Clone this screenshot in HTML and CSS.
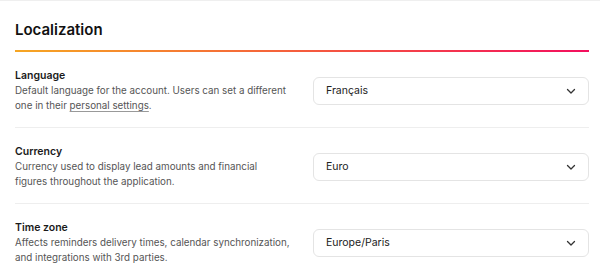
FILE: index.html
```html
<!DOCTYPE html>
<html lang="en">
<head>
  <meta charset="UTF-8">
  <meta name="viewport" content="width=device-width, initial-scale=1.0">
  <title>Localization</title>
  <link rel="stylesheet" href="styles.css">
</head>
<body>
  <div class="panel">
    <div class="panel-header">
      <h2>Localization</h2>
    </div>

    <div class="row">
      <div class="info">
        <div class="label">Language</div>
        <p class="desc">Default language for the account. Users can set a different one in their <a href="#">personal settings</a>.</p>
      </div>
      <div class="select">
        <span>Français</span>
        <svg width="12" height="12" viewBox="0 0 12 12"><path d="M2.5 4.5 6 8l3.5-3.5" fill="none" stroke="#333" stroke-width="1.3" stroke-linecap="round" stroke-linejoin="round"/></svg>
      </div>
    </div>

    <div class="row">
      <div class="info">
        <div class="label">Currency</div>
        <p class="desc">Currency used to display lead amounts and financial figures throughout the application.</p>
      </div>
      <div class="select">
        <span>Euro</span>
        <svg width="12" height="12" viewBox="0 0 12 12"><path d="M2.5 4.5 6 8l3.5-3.5" fill="none" stroke="#333" stroke-width="1.3" stroke-linecap="round" stroke-linejoin="round"/></svg>
      </div>
    </div>

    <div class="row">
      <div class="info">
        <div class="label">Time zone</div>
        <p class="desc">Affects reminders delivery times, calendar synchronization, and integrations with 3rd parties.</p>
      </div>
      <div class="select">
        <span>Europe/Paris</span>
        <svg width="12" height="12" viewBox="0 0 12 12"><path d="M2.5 4.5 6 8l3.5-3.5" fill="none" stroke="#333" stroke-width="1.3" stroke-linecap="round" stroke-linejoin="round"/></svg>
      </div>
    </div>
  </div>
</body>
</html>
```

FILE: styles.css
```css
body {
  font-family: Inter, "Noto Sans", sans-serif;
  margin: 0;
  padding: 0;
  background-color: #fff;
  color: #1a1a1a;
}

.panel {
  border-top: 1px solid #efefef;
  padding: 0 11px 0 15px;
}

.panel-header {
  padding-top: 19px;
  padding-bottom: 12px;
  position: relative;
}

.panel-header::after {
  content: "";
  position: absolute;
  left: 0;
  right: 0;
  bottom: 0;
  height: 2px;
  background: linear-gradient(90deg, #f6a623 0%, #f5643a 45%, #f30f5e 100%);
}

.panel-header h2 {
  margin: 0;
  font-size: 15px;
  font-weight: 600;
  line-height: 20px;
  color: #111;
}

.row {
  display: grid;
  grid-template-columns: 1fr 276px;
  gap: 23px;
  align-items: center;
  padding: 16px 0 14px;
  border-bottom: 1px solid #eeeeee;
}

.row:last-child {
  border-bottom: none;
}

.label {
  font-size: 10.5px;
  font-weight: 600;
  line-height: 15px;
  color: #1a1a1a;
}

.desc {
  margin: 0;
  font-size: 9.8px;
  line-height: 15px;
  color: #555;
}

.desc a {
  color: #555;
  text-decoration: underline;
  text-decoration-color: #999;
  text-underline-offset: 2px;
}

.select {
  display: flex;
  align-items: center;
  justify-content: space-between;
  height: 28px;
  box-sizing: border-box;
  padding: 0 11px 0 12px;
  border: 1px solid #e4e4e4;
  border-radius: 6px;
  font-size: 10.5px;
  color: #222;
}

.select svg {
  display: block;
}
```
